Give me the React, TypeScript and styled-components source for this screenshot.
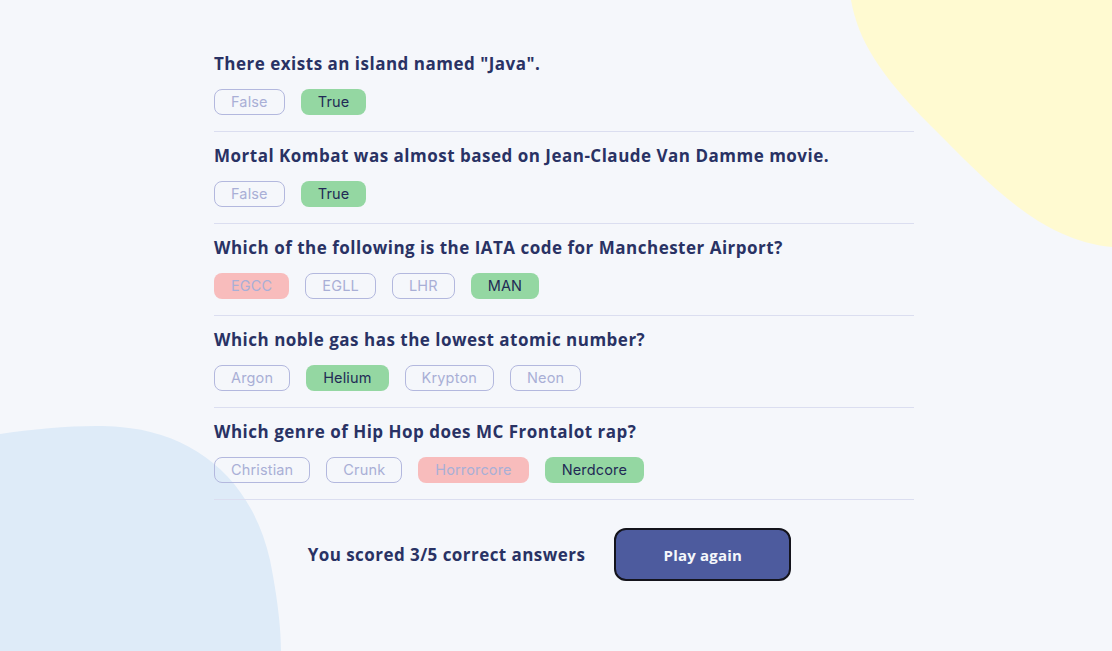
import React from "react";
import styled, { createGlobalStyle } from "styled-components";

const GlobalStyle = createGlobalStyle`
  html, body { margin: 0; padding: 0; }
  body {
    background: #f5f7fb;
    font-family: "Open Sans", "Liberation Sans", sans-serif;
    overflow: hidden;
  }
`;

const Page = styled.div`
  position: relative;
  width: 1112px;
  height: 651px;
  overflow: hidden;
  background: #f5f7fb;
  padding: 40px 0 0 16px;
  box-sizing: border-box;
`;

const Blob = styled.svg`
  position: absolute;
  left: 0;
  top: 0;
  width: 1112px;
  height: 651px;
  pointer-events: none;
`;

const Column = styled.main`
  position: relative;
  width: 700px;
  margin: 0 auto;
  display: flex;
  flex-direction: column;
`;

const QuestionBlock = styled.section`
  padding: 14px 0 16px;
  border-bottom: 1px solid #dbdef0;
  display: flex;
  flex-direction: column;
  gap: 15px;
`;

const Title = styled.h2`
  margin: 0;
  font-family: "Open Sans", "Liberation Sans", sans-serif;
  font-weight: 700;
  font-size: 17px;
  letter-spacing: 0.5px;
  line-height: 20px;
  color: #293264;
`;

const Answers = styled.div`
  display: flex;
  gap: 16px;
`;

type Kind = "idle" | "correct" | "wrong";

const Answer = styled.button<{ $kind: Kind }>`
  height: 26px;
  box-sizing: border-box;
  padding: 0 16px;
  border-radius: 8px;
  font-family: Inter, "Liberation Sans", sans-serif;
  font-size: 14.5px;
  letter-spacing: 0.15px;
  line-height: 24px;
  cursor: pointer;
  border: 1px solid
    ${(p) => (p.$kind === "idle" ? "#b3b8de" : "transparent")};
  background: ${(p) =>
    p.$kind === "correct" ? "#94d7a2" : p.$kind === "wrong" ? "#f8bcbc" : "transparent"};
  color: ${(p) => (p.$kind === "correct" ? "#222a55" : "#a9afd6")};
`;

const ScoreRow = styled.div`
  display: flex;
  justify-content: center;
  align-items: center;
  gap: 29px;
  padding-right: 29px;
  margin-top: 28px;
`;

const Score = styled.span`
  font-family: "Open Sans", "Liberation Sans", sans-serif;
  font-weight: 700;
  font-size: 17px;
  letter-spacing: 0.45px;
  color: #293264;
`;

const PlayButton = styled.button`
  width: 177px;
  height: 53px;
  box-sizing: border-box;
  border: 2px solid #14141c;
  border-radius: 12px;
  background: #4d5b9e;
  color: #f5f7fb;
  font-family: "Open Sans", "Liberation Sans", sans-serif;
  font-weight: 700;
  font-size: 15px;
  letter-spacing: 0.2px;
  cursor: pointer;
`;

const questions: { q: string; answers: [string, Kind][] }[] = [
  { q: 'There exists an island named "Java".', answers: [["False", "idle"], ["True", "correct"]] },
  {
    q: "Mortal Kombat was almost based on Jean-Claude Van Damme movie.",
    answers: [["False", "idle"], ["True", "correct"]],
  },
  {
    q: "Which of the following is the IATA code for Manchester Airport?",
    answers: [["EGCC", "wrong"], ["EGLL", "idle"], ["LHR", "idle"], ["MAN", "correct"]],
  },
  {
    q: "Which noble gas has the lowest atomic number?",
    answers: [["Argon", "idle"], ["Helium", "correct"], ["Krypton", "idle"], ["Neon", "idle"]],
  },
  {
    q: "Which genre of Hip Hop does MC Frontalot rap?",
    answers: [["Christian", "idle"], ["Crunk", "idle"], ["Horrorcore", "wrong"], ["Nerdcore", "correct"]],
  },
];

export default function App() {
  return (
    <>
      <GlobalStyle />
      <Page>
        <Blob viewBox="0 0 1112 651">
          <path
            d="M851,0 C858,40 880,75 930,125 C990,185 1040,240 1112,247 L1112,0 Z"
            fill="#fffad1"
          />
          <path
            d="M0,434 C40,428 90,424 120,427 C195,433 252,480 270,560 C278,600 281,630 281,651 L0,651 Z"
            fill="#deebf8"
          />
        </Blob>
        <Column>
          {questions.map((item) => (
            <QuestionBlock key={item.q}>
              <Title>{item.q}</Title>
              <Answers>
                {item.answers.map(([a, k]) => (
                  <Answer key={a} $kind={k}>
                    {a}
                  </Answer>
                ))}
              </Answers>
            </QuestionBlock>
          ))}
          <ScoreRow>
            <Score>You scored 3/5 correct answers</Score>
            <PlayButton>Play again</PlayButton>
          </ScoreRow>
        </Column>
      </Page>
    </>
  );
}
